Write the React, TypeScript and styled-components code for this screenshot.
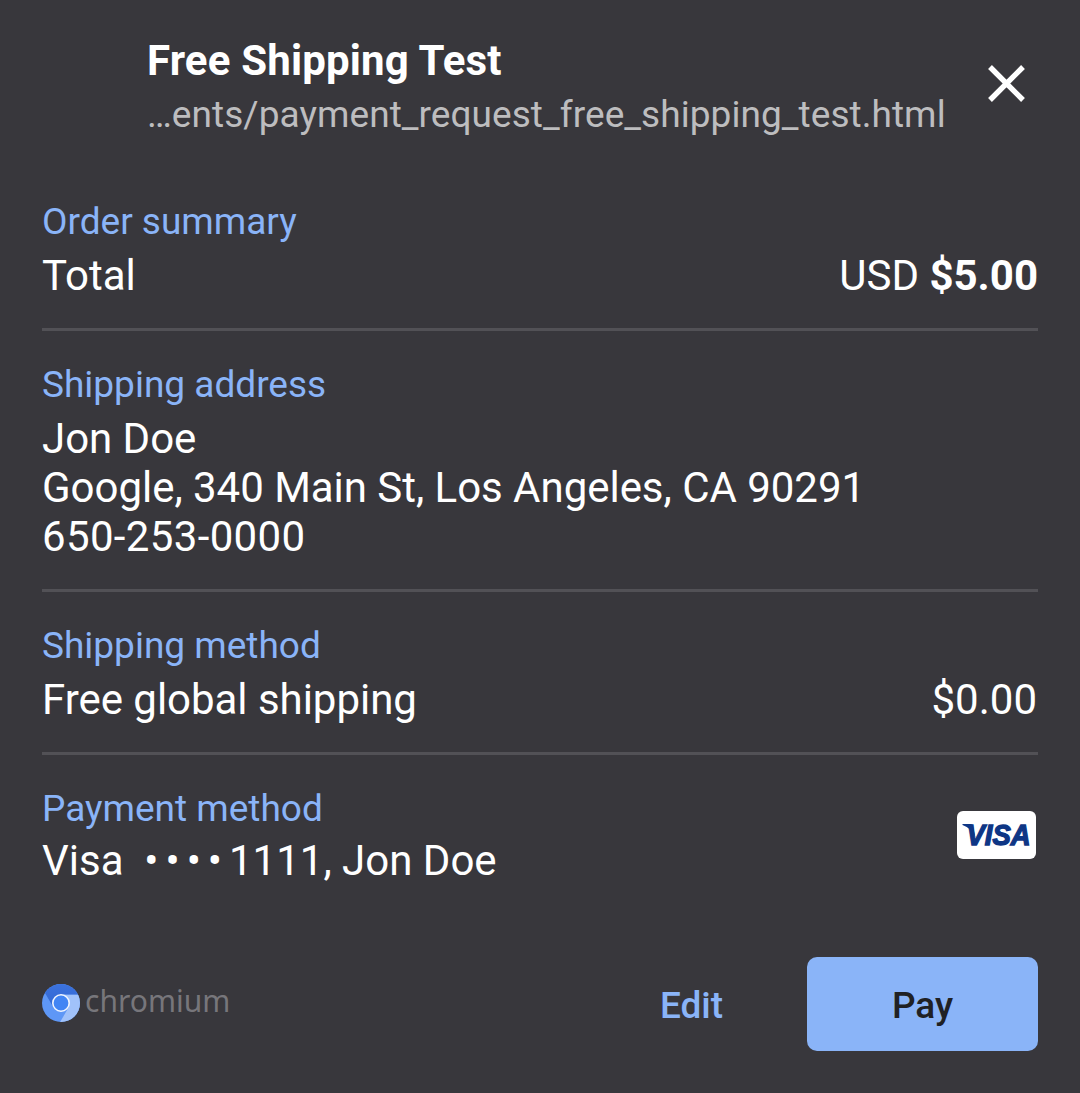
import React from "react";
import styled, { createGlobalStyle } from "styled-components";

const Global = createGlobalStyle`
  * { box-sizing: border-box; }
  body { margin: 0; background: #38373c; font-family: Roboto, "Liberation Sans", sans-serif; }
`;
const Sheet = styled.main`
  width: 1080px; height: 1093px; padding: 0 42px; background: #38373c; color: #fff;
  display: flex; flex-direction: column;
`;
const Header = styled.header`
  display: flex; justify-content: space-between; height: 168px; padding: 36px 0 0 105px;
`;
const Title = styled.h1`
  margin: 0; font-size: 42px; line-height: 49px; font-weight: 700; white-space: nowrap;
  letter-spacing: 0.17px;
`;
const Origin = styled.div`
  margin-top: 8px; font-size: 37px; line-height: 43px; color: #bdbdbf; white-space: nowrap;
  letter-spacing: 0.06px;
`;
const Close = styled.button`
  width: 38px; height: 38px; margin: 29px 12px 0 0; padding: 0; border: 0; background: none;
  svg { display: block; }
`;
const Section = styled.section<{ $height: number; $last?: boolean }>`
  height: ${p => p.$height}px; padding-top: 32px;
  border-bottom: ${p => (p.$last ? "0" : "3px solid #525156")};
  display: flex; justify-content: space-between;
`;
const Body = styled.div` flex: 1; `;
const Label = styled.h2`
  margin: 0; font-size: 37px; line-height: 43px; font-weight: 400; color: #8ab4f8; white-space: nowrap;
`;
const Row = styled.div<{ $tight?: boolean }>`
  display: flex; justify-content: space-between; margin-top: ${p => (p.$tight ? 6 : 8)}px;
  font-size: 42px; line-height: 49px; white-space: pre;
`;
const Address = styled.span` letter-spacing: -0.03px; `;
const Phone = styled.span` letter-spacing: 0.35px; `;
const Price = styled.span` padding-right: 1px; `;
const Dots = styled.span` letter-spacing: 7px; `;
const CardIcon = styled.svg`
  display: block; margin: 24px 2px 0 0; flex: none; overflow: visible;
`;
const Footer = styled.footer`
  display: flex; align-items: center; height: 94px;
`;
const Brand = styled.div`
  display: flex; align-items: center; gap: 5px; flex: 1; padding-bottom: 2px; color: #77767b;
  font: 30px/40px "Noto Sans", sans-serif;
`;
const BrandName = styled.span` margin-top: -4px; `;
const Button = styled.button<{ $primary?: boolean }>`
  width: 231px; height: 94px; border: 0; border-radius: 10px; padding: 2px 0 0;
  font: 500 37px/43px Roboto, sans-serif;
  color: ${p => (p.$primary ? "#202124" : "#8ab4f8")};
  background: ${p => (p.$primary ? "#8ab4f8" : "transparent")};
`;

const ChromiumLogo = () => (
  <svg width="38" height="38" viewBox="0 0 38 38">
    <defs>
      <clipPath id="disc"><circle cx="19" cy="19" r="19" /></clipPath>
      <linearGradient id="top" x1="0" y1="0" x2="0" y2="1">
        <stop offset="0" stopColor="#3b72de" /><stop offset="1" stopColor="#3367d1" />
      </linearGradient>
    </defs>
    <g clipPath="url(#disc)">
      <path fill="#5e97f6" d="M0 0H38V38H0Z" />
      <path fill="#a1c2fa" d="M19 10.5H40V40H17L26.5 23.5Z" />
      <path fill="url(#top)" d="M3 9 0 0H38V10.5H19L11.5 23.5Z" />
    </g>
    <circle cx="19" cy="19" r="8.2" fill="#4285f4" stroke="#f1f5fe" strokeWidth="1.6" />
  </svg>
);

export default function App() {
  return (
    <Sheet>
      <Global />
      <Header>
        <div>
          <Title>Free Shipping Test</Title>
          <Origin>…ents/payment_request_free_shipping_test.html</Origin>
        </div>
        <Close aria-label="Close">
          <svg width="38" height="38" viewBox="0 0 38 38" stroke="#fff" strokeWidth="5.4"><path d="M2 2 35 35M35 2 2 35" /></svg>
        </Close>
      </Header>
      <Section $height={163}><Body><Label>Order summary</Label><Row><span>Total</span><span>USD <b>$5.00</b></span></Row></Body></Section>
      <Section $height={261}>
        <Body>
          <Label>Shipping address</Label>
          <Row><Address>{"Jon Doe\nGoogle, 340 Main St, Los Angeles, CA 90291\n"}<Phone>650-253-0000</Phone></Address></Row>
        </Body>
      </Section>
      <Section $height={163}><Body><Label>Shipping method</Label><Row><Address>Free global shipping</Address><Price>$0.00</Price></Row></Body></Section>
      <Section $height={202} $last>
        <Body>
          <Label>Payment method</Label>
          <Row $tight><span>{"Visa  "}<Dots>••••</Dots>1111, Jon Doe</span></Row>
        </Body>
        <CardIcon width="79" height="48" viewBox="0 0 79 48">
          <rect width="79" height="48" rx="6" fill="#fff" />
          <path fill="#0e3685" d="M5.5 13H13.5Q15.500 13 16 15.200L18.500 27Q15 17.500 5.500 14.100Z" />
          <text x="9.500" y="34" fill="#0e3685" stroke="#0e3685" strokeWidth="1.4" fontFamily="Liberation Sans, Arial, sans-serif" fontWeight="700" fontStyle="italic" fontSize="29.500" textLength="64" lengthAdjust="spacingAndGlyphs">VISA</text>
        </CardIcon>
      </Section>
      <Footer>
        <Brand><ChromiumLogo /><BrandName>chromium</BrandName></Brand>
        <Button>Edit</Button>
        <Button $primary>Pay</Button>
      </Footer>
    </Sheet>
  );
}
